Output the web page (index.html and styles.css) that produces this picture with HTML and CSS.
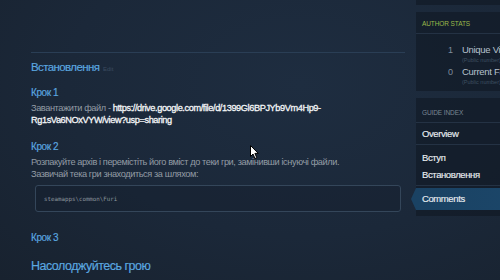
FILE: index.html
```html
<!doctype html>
<html>
    <head>
        <meta charset="utf-8">
        <title>Guide</title>
        <link rel="stylesheet" href="styles.css">
    </head>
    <body>
        <div class="page">
            <div class="main">
                <div class="divider"></div>
                <h2 class="section">Встановлення <span class="edit">Edit</span></h2>
                <h3 class="step">Крок 1</h3>
                <p>Завантажити файл - <a class="link">https://drive.google.com/file/d/1399Gl6BPJYb9Vm4Hp9-<br>Rg1sVa6NOxVYW/view?usp=sharing</a></p>
                <h3 class="step step-gap">Крок 2</h3>
                <p>Розпакуйте архів і перемістіть його вміст до теки гри, замінивши існуючі файли.<br>Зазвичай тека гри знаходиться за шляхом:</p>
                <div class="code">steamapps\common\Furi</div>
                <h3 class="step step-3">Крок 3</h3>
                <h2 class="section section-end">Насолоджуйтесь грою</h2>
            </div>
            <div class="sidebar">
                <div class="panel panel-top"></div>
                <div class="panel stats">
                    <div class="panel-title green">Author Stats</div>
                    <div class="stat">
                        <span class="num">1</span>
                        <span class="label">Unique Visitors<small>(Public number)</small></span>
                    </div>
                    <div class="stat">
                        <span class="num">0</span>
                        <span class="label">Current Favorites<small>(Public number)</small></span>
                    </div>
                </div>
                <div class="panel index">
                    <div class="panel-title">Guide Index</div>
                    <div class="item item-line">Overview</div>
                    <div class="group">
                        <div class="item">Вступ</div>
                        <div class="item">Встановлення</div>
                    </div>
                    <div class="item active">Comments</div>
                </div>
            </div>
        </div>
        <svg class="cursor" width="10" height="15" viewBox="0 0 10 15">
            <path d="M0.5 0.5 L0.5 11.5 L3 9 L5 13.5 L6.8 12.7 L4.9 8.4 L8.3 8.4 Z" fill="#fff" stroke="#000" stroke-width="1"/>
        </svg>
    </body>
</html>
```

FILE: styles.css
```css
* {
    box-sizing: border-box;
}

html, body {
    margin: 0;
    height: 100%;
    overflow: hidden;
}

body {
    font-family: "Liberation Sans", Arial, sans-serif;
    background: radial-gradient(ellipse at 60% 30%, #1e2d40 0%, #1b2839 55%, #18222f 100%);
    color: #8f98a0;
}

.page {
    display: flex;
    width: 760px;
}

.main {
    width: 374px;
    margin-left: 31px;
    padding-top: 52px;
}

.divider {
    border-top: 1px solid #2a3e55;
}

.section {
    margin: 7px 0 0;
    font-size: 11.5px;
    line-height: 15px;
    letter-spacing: -0.6px;
    font-weight: normal;
    color: #5ba8e0;
    -webkit-text-stroke: 0.15px currentColor;
}

.edit {
    margin-left: 1px;
    font-size: 6px;
    letter-spacing: 0;
    color: #3b4c60;
    -webkit-text-stroke: 0;
}

.section-end {
    margin-top: 13px;
    font-size: 12.5px;
    line-height: 16px;
    letter-spacing: -0.5px;
}

.step {
    margin: 9px 0 0;
    font-size: 10px;
    line-height: 14px;
    letter-spacing: -0.4px;
    font-weight: normal;
    color: #5ba8e0;
    -webkit-text-stroke: 0.15px currentColor;
}

.step-gap {
    margin-top: 14px;
}

.step-3 {
    margin-top: 19px;
}

p {
    margin: 2px 0 0;
    font-size: 9.2px;
    line-height: 12px;
    letter-spacing: -0.4px;
    color: #939ca5;
}

.link {
    color: #f4f6f8;
    letter-spacing: -0.4px;
    -webkit-text-stroke: 0.3px currentColor;
}

.code {
    margin: 5px 4px 0;
    height: 27px;
    padding: 0 8px;
    display: flex;
    align-items: center;
    border: 1px solid #34465a;
    border-radius: 3px;
    background: rgba(20, 30, 42, 0.35);
    font-family: "DejaVu Sans Mono", monospace;
    font-size: 5.8px;
    color: #8c959e;
}

.sidebar {
    width: 260px;
    margin-left: 11px;
}

.panel {
    background: rgba(14, 22, 32, 0.55);
    margin-bottom: 7px;
}

.panel-top {
    height: 5px;
}

.stats {
    height: 79px;
}

.panel-title {
    padding-left: 6px;
    font-size: 6.5px;
    letter-spacing: -0.1px;
    text-transform: uppercase;
    color: #7a8694;
    border-bottom: 1px solid #243244;
}

.stats .panel-title {
    height: 22px;
    line-height: 24px;
}

.green {
    color: #9ab94a;
}

.stat {
    display: flex;
    margin-top: 9.5px;
}

.stat + .stat {
    margin-top: 2.5px;
}

.num {
    width: 37px;
    text-align: right;
    font-size: 9px;
    line-height: 12px;
    color: #7f8d9c;
}

.label {
    margin-left: 9px;
    font-size: 9.5px;
    line-height: 12px;
    letter-spacing: -0.3px;
    color: #b6c2ce;
}

.label small {
    display: block;
    font-size: 5.5px;
    line-height: 8px;
    letter-spacing: 0;
    color: #3f5062;
}

.index {
    height: 118px;
}

.index .panel-title {
    height: 25px;
    line-height: 29px;
}

.item {
    padding-left: 6px;
    font-size: 9.5px;
    line-height: 17px;
    letter-spacing: -0.4px;
    color: #e8edf1;
    -webkit-text-stroke: 0.15px currentColor;
}

.item-line {
    height: 22px;
    line-height: 22px;
    border-bottom: 1px solid #243244;
}

.group {
    padding: 4px 0 2px;
    border-bottom: 1px solid #243244;
}

.active {
    position: relative;
    margin-top: 2px;
    height: 22px;
    line-height: 22px;
    background: linear-gradient(to right, #1a4263, #1d4c72);
}

.active::before {
    content: "";
    position: absolute;
    left: -5px;
    top: 0;
    border-top: 11px solid transparent;
    border-bottom: 11px solid transparent;
    border-right: 5px solid #1a4263;
}

.cursor {
    position: absolute;
    left: 250px;
    top: 145px;
}
```
